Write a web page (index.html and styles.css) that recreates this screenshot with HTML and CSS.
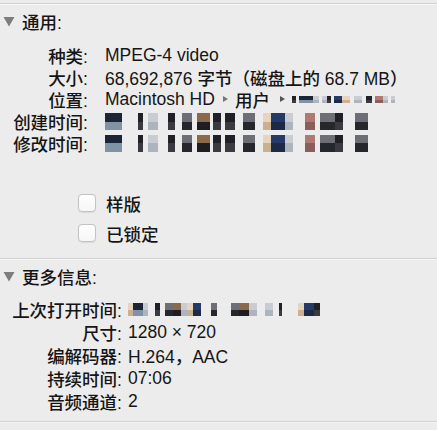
FILE: index.html
```html
<!DOCTYPE html>
<html lang="zh-CN">
<head>
<meta charset="utf-8">
<title>简介</title>
<link rel="stylesheet" href="styles.css">
</head>
<body>
<div class="panel">
  <div class="sep"></div>
  <div class="head">
    <svg class="tri" width="12" height="11" viewBox="0 0 12 11"><polygon points="0.5,1 11.5,1 6,10.5" fill="#7d7d7d"/></svg>
    <span>通用:</span>
  </div>
  <div class="grid grid-general">
    <div class="lbl">种类:</div><div class="val">MPEG-4 video</div>
    <div class="lbl">大小:</div><div class="val">68,692,876 字节（磁盘上的 68.7 MB）</div>
    <div class="lbl">位置:</div>
    <div class="val path">Macintosh HD<span class="arrow"></span>用户<span class="arrow2"></span>
      <span class="mz thin"><i class="b w4"></i><i class="x w3"></i><i class="a w14"></i><i class="c w6"></i><i class="x w3"></i><i class="c w5"></i><i class="b w4"></i><i class="x w3"></i><i class="e w8"></i><i class="d w8"></i><i class="x w4"></i><i class="c w8"></i><i class="x w4"></i><i class="b w6"></i><i class="x w3"></i><i class="f w8"></i><i class="c w5"></i><i class="x w3"></i><i class="c w4"></i></span>
    </div>
    <div class="lbl">创建时间:</div>
    <div class="val"><span class="mz"><i class="a w17"></i><i class="x w16"></i><i class="b w5"></i><i class="x w5"></i><i class="c w10"></i><i class="x w10"></i><i class="b w7"></i><i class="x w7"></i><i class="g w10"></i><i class="x w5"></i><i class="h w13"></i><i class="x w3"></i><i class="b w8"></i><i class="x w4"></i><i class="b w10"></i><i class="x w8"></i><i class="g w12"></i><i class="x w8"></i><i class="d w8"></i><i class="e w14"></i><i class="c w8"></i><i class="x w12"></i><i class="f w10"></i><i class="x w5"></i><i class="g w15"></i><i class="b w8"></i><i class="x w12"></i><i class="g w13"></i></span></div>
    <div class="lbl">修改时间:</div>
    <div class="val"><span class="mz"><i class="a w17"></i><i class="x w16"></i><i class="b w5"></i><i class="x w5"></i><i class="c w10"></i><i class="x w10"></i><i class="b w7"></i><i class="x w7"></i><i class="g w10"></i><i class="x w5"></i><i class="h w13"></i><i class="x w3"></i><i class="b w8"></i><i class="x w4"></i><i class="b w10"></i><i class="x w8"></i><i class="g w12"></i><i class="x w8"></i><i class="d w8"></i><i class="e w14"></i><i class="c w8"></i><i class="x w12"></i><i class="f w10"></i><i class="x w5"></i><i class="g w15"></i><i class="b w8"></i><i class="x w12"></i><i class="g w13"></i></span></div>
  </div>
  <div class="checks">
    <label class="check"><span class="box"></span><span>样版</span></label>
    <label class="check"><span class="box"></span><span>已锁定</span></label>
  </div>
  <div class="sep"></div>
  <div class="head">
    <svg class="tri" width="12" height="11" viewBox="0 0 12 11"><polygon points="0.5,1 11.5,1 6,10.5" fill="#7d7d7d"/></svg>
    <span>更多信息:</span>
  </div>
  <div class="grid grid-more">
    <div class="lbl">上次打开时间:</div>
    <div class="val"><span class="mz mid"><i class="d w5"></i><i class="a w10"></i><i class="c w5"></i><i class="x w7"></i><i class="b w5"></i><i class="x w5"></i><i class="g w8"></i><i class="h w8"></i><i class="c w6"></i><i class="d w6"></i><i class="e w8"></i><i class="x w10"></i><i class="g w6"></i><i class="x w14"></i><i class="g w8"></i><i class="h w10"></i><i class="c w8"></i><i class="x w8"></i><i class="c w8"></i><i class="x w6"></i><i class="b w3"></i><i class="x w16"></i><i class="d w6"></i><i class="e w10"></i><i class="b w6"></i></span></div>
    <div class="lbl">尺寸:</div><div class="val">1280 × 720</div>
    <div class="lbl">编解码器:</div><div class="val">H.264，AAC</div>
    <div class="lbl">持续时间:</div><div class="val">07:06</div>
    <div class="lbl">音频通道:</div><div class="val">2</div>
  </div>
  <div class="sep sep-bottom"></div>
</div>
</body>
</html>
```

FILE: styles.css
```css
html, body {
  margin: 0;
  padding: 0;
  background: #ececec;
}
body {
  font-family: "Liberation Sans", "Noto Sans CJK SC", sans-serif;
  font-size: 17.5px;
  font-weight: 500;
  color: #151515;
  width: 437px;
  height: 430px;
  overflow: hidden;
}
.panel {
  padding-top: 3px;
}
.sep {
  height: 1px;
  background: #d2d2d2;
  box-shadow: 0 1px 0 #f6f6f6;
}
.head {
  height: 34px;
  display: flex;
  align-items: center;
  padding-left: 3px;
}
.head .tri {
  margin-right: 7px;
  flex: none;
}
.grid {
  display: grid;
  align-items: center;
}
.grid-general {
  grid-template-columns: 88px auto;
  grid-auto-rows: 22px;
  column-gap: 17px;
  margin-top: 6px;
}
.grid-more {
  grid-template-columns: 122px auto;
  grid-auto-rows: 23px;
  column-gap: 6px;
  margin-top: 5px;
}
.lbl {
  text-align: right;
  white-space: nowrap;
}
.val {
  white-space: nowrap;
  display: flex;
  align-items: center;
}
.arrow {
  display: inline-block;
  width: 0;
  height: 0;
  border-left: 5px solid #777;
  border-top: 3.5px solid transparent;
  border-bottom: 3.5px solid transparent;
  margin: 0 7px 0 8px;
}
.arrow2 {
  display: inline-block;
  width: 0;
  height: 0;
  border-left: 5px solid #555;
  border-top: 3.5px solid transparent;
  border-bottom: 3.5px solid transparent;
  margin: 0 4px 0 10px;
}
.mz {
  display: inline-flex;
  height: 17px;
}
.mz.thin {
  height: 7px;
  margin-left: 3px;
}
.mz.mid {
  height: 13px;
}
.mz i {
  display: block;
  height: 100%;
}
.x { background: transparent; }
.a { background: linear-gradient(#1b2535 50%, #7f92a6 50%); }
.b { background: linear-gradient(#202126 50%, #3a3a40 50%); }
.c { background: linear-gradient(#c9ccd2 50%, #aeb4bd 50%); }
.d { background: linear-gradient(#e6d4be 50%, #cbb08f 50%); }
.e { background: linear-gradient(#243a68 50%, #1c2a48 50%); }
.f { background: linear-gradient(#b07a73 50%, #8a5f5a 50%); }
.g { background: linear-gradient(#6e6f76 50%, #25272d 50%); }
.h { background: linear-gradient(#8a6a4a 50%, #1d1d22 50%); }
.w3 { width: 3px; } .w4 { width: 4px; } .w5 { width: 5px; } .w6 { width: 6px; }
.w7 { width: 7px; } .w8 { width: 8px; } .w10 { width: 10px; } .w12 { width: 12px; }
.w13 { width: 13px; } .w14 { width: 14px; } .w15 { width: 15px; } .w16 { width: 16px; }
.w17 { width: 17px; }
.checks {
  margin-top: 34px;
  padding-left: 78px;
  margin-bottom: 10px;
}
.check {
  display: flex;
  align-items: center;
  height: 30px;
}
.box {
  width: 16px;
  height: 16px;
  border: 1px solid #c3c3c3;
  border-radius: 4px;
  background: linear-gradient(#ffffff, #f6f6f6);
  box-shadow: 0 0.5px 1px rgba(0,0,0,0.08);
  margin-right: 10px;
  flex: none;
}
.sep-bottom {
  margin-top: 8px;
}
```
